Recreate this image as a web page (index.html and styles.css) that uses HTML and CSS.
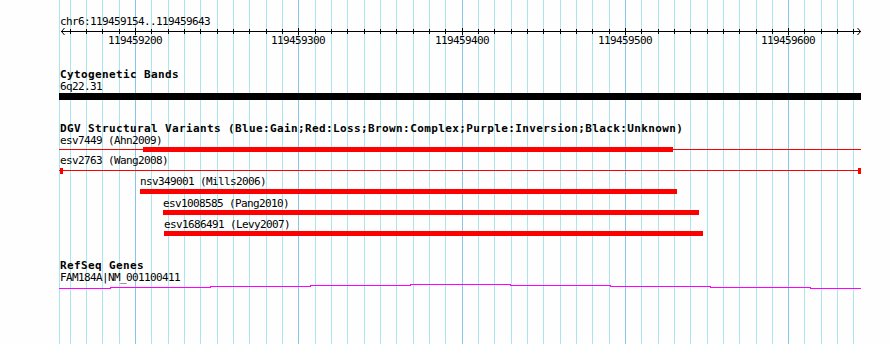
FILE: index.html
```html
<!DOCTYPE html>
<html lang="en">
<head>
  <meta charset="UTF-8">
  <title>chr6:119459154..119459643</title>
  <link rel="stylesheet" href="styles.css">
</head>
<body>

  <div class="browser">
    <svg id="panel" width="890" height="344" viewBox="0 0 890 344">
      <!-- grid and ruler ticks are filled in by the script below -->
      <g id="grid"></g>

      <!-- ruler -->
      <text class="small" x="60" y="25">chr6:119459154..119459643</text>
      <g class="axis">
        <line x1="61" y1="31.5" x2="861" y2="31.5"></line>
        <polyline class="arrow" points="64.5,28 61.5,31.5 64.5,35"></polyline>
        <polyline class="arrow" points="857.5,28 860.5,31.5 857.5,35"></polyline>
        <g id="ticks"></g>
      </g>
      <g id="tickLabels"></g>

      <!-- Cytogenetic Bands -->
      <text class="title" x="60" y="78">Cytogenetic Bands</text>
      <text class="small" x="60" y="90">6q22.31</text>
      <rect class="band" x="59" y="93" width="802" height="7"></rect>

      <!-- DGV -->
      <text class="title" x="60" y="132">DGV Structural Variants (Blue:Gain;Red:Loss;Brown:Complex;Purple:Inversion;Black:Unknown)</text>

      <text class="small" x="60" y="144">esv7449 (Ahn2009)</text>
      <line class="loss-line" x1="59" y1="149.5" x2="861" y2="149.5"></line>
      <rect class="loss" x="143" y="147" width="530" height="5"></rect>

      <text class="small" x="60" y="164">esv2763 (Wang2008)</text>
      <line class="loss-line" x1="59" y1="170.5" x2="861" y2="170.5"></line>
      <rect class="loss" x="60" y="168" width="3" height="6"></rect>
      <rect class="loss" x="858" y="168" width="3" height="6"></rect>

      <text class="small" x="140" y="185">nsv349001 (Mills2006)</text>
      <rect class="loss" x="140" y="189" width="537" height="5"></rect>

      <text class="small" x="163" y="207">esv1008585 (Pang2010)</text>
      <rect class="loss" x="163" y="210" width="536" height="5"></rect>

      <text class="small" x="164" y="228">esv1686491 (Levy2007)</text>
      <rect class="loss" x="164" y="231" width="539" height="5"></rect>

      <!-- RefSeq -->
      <text class="title" x="60" y="269">RefSeq Genes</text>
      <text class="small" x="60" y="281">FAM184A|NM_001100411</text>
      <polyline class="gene" points="59,288.5 110.5,288.5 110.5,287.5 210.5,287.5 210.5,286.5 310.5,286.5 310.5,285.5 410.5,285.5 410.5,284.5 510.5,284.5 510.5,285.5 610.5,285.5 610.5,286.5 710.5,286.5 710.5,287.5 810.5,287.5 810.5,288.5 861,288.5"></polyline>
    </svg>
  </div>

  <script>
    const ns = 'http://www.w3.org/2000/svg';
    const start = 119459154;
    const scale = 800 / 490;
    const grid = document.getElementById('grid');
    const ticks = document.getElementById('ticks');
    const labels = document.getElementById('tickLabels');

    function add(parent, tag, attrs) {
      const el = document.createElementNS(ns, tag);
      for (const k in attrs) el.setAttribute(k, attrs[k]);
      parent.appendChild(el);
      return el;
    }

    // left edge of the panel
    add(grid, 'line', { x1: 59.5, y1: 0, x2: 59.5, y2: 344, class: 'grid-minor' });

    for (let bp = 119459160; bp <= 119459640; bp += 10) {
      const x = Math.round(60 + (bp - start) * scale) + 0.5;
      const major = bp % 100 === 0;
      add(grid, 'line', { x1: x, y1: 0, x2: x, y2: 344, class: major ? 'grid-major' : 'grid-minor' });
      add(ticks, 'line', { x1: x, y1: major ? 28 : 29, x2: x, y2: major ? 35 : 34 });
      if (major) {
        const t = add(labels, 'text', { x: x - 27.5, y: 44, class: 'small' });
        t.textContent = bp;
      }
    }
  </script>

</body>
</html>
```

FILE: styles.css
```css
body {
  margin: 0;
  background-color: #fdfefd;
}

.browser {
  width: 890px;
  height: 344px;
  overflow: hidden;
}

#panel {
  display: block;
}

.small {
  font-family: "DejaVu Sans Mono", "Liberation Mono", monospace;
  font-size: 11px;
  letter-spacing: -0.62px;
  fill: #000;
}

.title {
  font-family: "DejaVu Sans Mono", "Liberation Mono", monospace;
  font-size: 11px;
  font-weight: bold;
  letter-spacing: 0.38px;
  fill: #000;
}

.grid-minor {
  stroke: #aae6ec;
  stroke-width: 1;
  shape-rendering: crispEdges;
}

.grid-major {
  stroke: #88c6e8;
  stroke-width: 1;
  shape-rendering: crispEdges;
}

.axis line {
  stroke: #000;
  stroke-width: 1;
  shape-rendering: crispEdges;
}

.axis .arrow {
  stroke: #000;
  stroke-width: 1;
  fill: none;
}

.band,
.loss {
  shape-rendering: crispEdges;
}

.band {
  fill: #000;
}

.loss {
  fill: #ff0000;
}

.loss-line {
  stroke: #ff0000;
  stroke-width: 1;
  shape-rendering: crispEdges;
}

.gene {
  stroke: #ff00ff;
  stroke-width: 1;
  fill: none;
  shape-rendering: crispEdges;
}
```
